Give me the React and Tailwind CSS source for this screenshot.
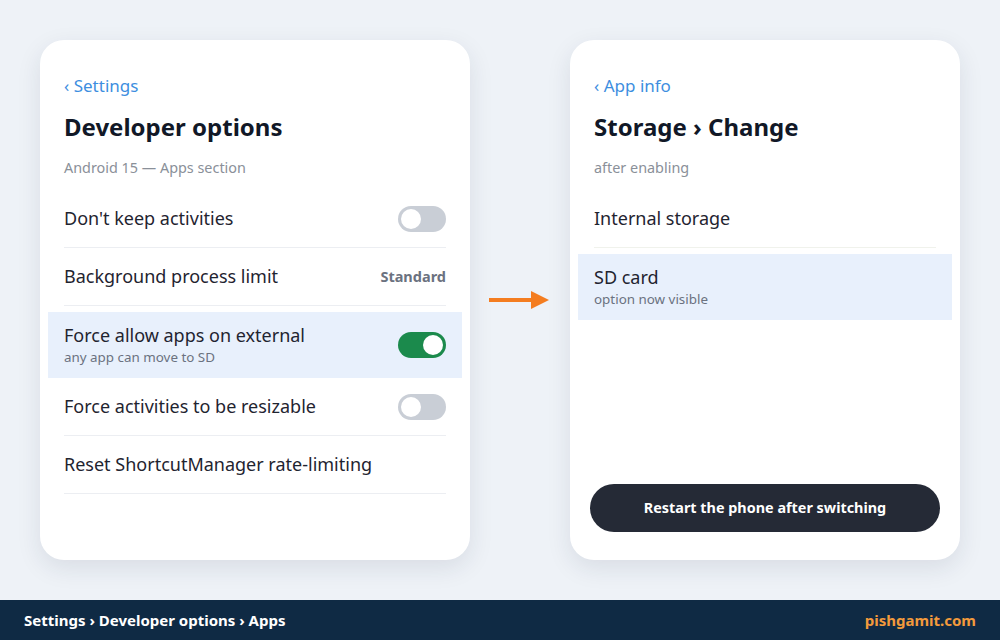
import React from "react";

function Toggle({ on }) {
  return (
    <div
      className={
        "w-[48px] h-[26px] rounded-full flex items-center px-[3px] " +
        (on ? "bg-[#1b8a4c] justify-end" : "bg-[#c9ced6] justify-start")
      }
    >
      <div className="w-[20px] h-[20px] rounded-full bg-white" />
    </div>
  );
}

function Row({ label, right }) {
  return (
    <div className="h-[58px] flex items-center justify-between border-b border-[#eceef2]">
      <span className="text-[18px] text-[#1f2430]">{label}</span>
      {right}
    </div>
  );
}

export default function App() {
  return (
    <div
      className="w-[1000px] h-[640px] bg-[#eef2f7] flex flex-col overflow-hidden"
      style={{ fontFamily: '"Noto Sans", "Open Sans", sans-serif' }}
    >
      <div className="flex-1 flex items-start pt-[40px] pl-[40px]">
        {/* Left card */}
        <div className="w-[430px] h-[520px] bg-white rounded-[24px] shadow-[0_8px_24px_rgba(30,40,70,0.10)] px-[24px] pt-[34px] flex flex-col">
          <div className="text-[17px] leading-[24px] text-[#3d8ee0]">‹ Settings</div>
          <div className="mt-[13px] text-[24px] leading-[32px] font-bold text-[#111827]">
            Developer options
          </div>
          <div className="mt-[15px] text-[14.4px] leading-[20px] text-[#8a9099]">
            Android 15 — Apps section
          </div>
          <div className="mt-[12px] flex flex-col">
            <Row label="Don't keep activities" right={<Toggle on={false} />} />
            <Row
              label="Background process limit"
              right={<span className="text-[14.5px] font-bold text-[#6b7280]">Standard</span>}
            />
            <div className="mt-[6px] -mx-[16px] px-[16px] h-[66px] bg-[#e8f0fc] flex items-center justify-between">
              <div className="flex flex-col">
                <span className="text-[18px] leading-[23px] text-[#1f2430]">
                  Force allow apps on external
                </span>
                <span className="text-[13.4px] leading-[20px] text-[#6b7280]">
                  any app can move to SD
                </span>
              </div>
              <Toggle on={true} />
            </div>
            <Row label="Force activities to be resizable" right={<Toggle on={false} />} />
            <Row label="Reset ShortcutManager rate-limiting" right={null} />
          </div>
        </div>

        {/* Arrow */}
        <div className="w-[100px] h-[520px] flex items-start justify-center pt-[249px]">
          <svg width="62" height="22" viewBox="0 0 62 22">
            <rect x="0" y="9" width="44" height="4" fill="#f47d20" />
            <polygon points="42,2 60,11 42,20" fill="#f47d20" />
          </svg>
        </div>

        {/* Right card */}
        <div className="w-[390px] h-[520px] bg-white rounded-[24px] shadow-[0_8px_24px_rgba(30,40,70,0.10)] px-[24px] pt-[34px] pb-[28px] flex flex-col">
          <div className="text-[17px] leading-[24px] text-[#3d8ee0]">‹ App info</div>
          <div className="mt-[13px] text-[24px] leading-[32px] font-bold text-[#111827]">
            Storage › Change
          </div>
          <div className="mt-[15px] text-[14.4px] leading-[20px] text-[#8a9099]">after enabling</div>
          <div className="mt-[12px] flex flex-col">
            <div className="h-[58px] flex items-center border-b border-[#f0f2ec]">
              <span className="text-[18px] text-[#1f2430]">Internal storage</span>
            </div>
            <div className="mt-[6px] -mx-[16px] px-[16px] h-[66px] bg-[#e8f0fc] flex flex-col justify-center">
              <span className="text-[18px] leading-[23px] text-[#1f2430]">SD card</span>
              <span className="text-[13.4px] leading-[20px] text-[#6b7280]">option now visible</span>
            </div>
          </div>
          <div className="mt-auto -mx-[4px] h-[48px] rounded-full bg-[#252a36] flex items-center justify-center">
            <span className="text-[14.4px] font-bold text-white">Restart the phone after switching</span>
          </div>
        </div>
      </div>

      {/* Footer */}
      <div className="h-[40px] bg-[#0f2a44] flex items-center justify-between px-[24px]">
        <span className="text-[15px] font-bold text-white">Settings › Developer options › Apps</span>
        <span className="text-[15px] font-bold text-[#f39a3c]">pishgamit.com</span>
      </div>
    </div>
  );
}
